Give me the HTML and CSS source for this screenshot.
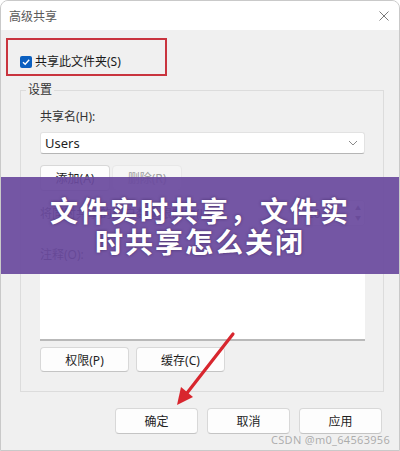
FILE: index.html
```html
<!DOCTYPE html>
<html lang="zh-CN">
<head>
    <meta charset="UTF-8">
    <meta name="viewport" content="width=device-width, initial-scale=1.0">
    <title>高级共享</title>
    <link rel="stylesheet" href="styles.css">
</head>
<body>
    <div class="window">
        <div class="titlebar">
            <span class="title">高级共享</span>
            <svg class="close" width="10" height="10" viewBox="0 0 10 10">
                <path d="M0.5 0.5 L9.5 9.5 M9.5 0.5 L0.5 9.5" />
            </svg>
        </div>

        <div class="content">
            <div class="highlight">
                <label class="check">
                    <span class="box">
                        <svg width="10" height="10" viewBox="0 0 10 10"><path d="M2 5.2 L4.2 7.3 L8.2 2.8" /></svg>
                    </span>
                    共享此文件夹(S)
                </label>
            </div>

            <fieldset class="group">
                <legend>设置</legend>
                <div class="field-label">共享名(H):</div>
                <div class="select">
                    <span>Users</span>
                    <svg width="10" height="6" viewBox="0 0 10 6"><path d="M1 1 L5 5 L9 1" /></svg>
                </div>
                <div class="btn-row small">
                    <button class="btn">添加(A)</button>
                    <button class="btn" disabled>删除(R)</button>
                </div>
                <div class="limit-row">
                    <span>将同时共享的用户数量限制为(L):</span>
                    <div class="spin">
                        <span>20</span>
                        <span class="spin-arrows"><i>▲</i><i>▼</i></span>
                    </div>
                </div>
                <div class="field-label comment">注释(O):</div>
                <div class="textarea"></div>
                <div class="btn-row wide">
                    <button class="btn">权限(P)</button>
                    <button class="btn">缓存(C)</button>
                </div>
            </fieldset>

            <div class="footer">
                <button class="btn">确定</button>
                <button class="btn">取消</button>
                <button class="btn">应用</button>
            </div>
        </div>

        <div class="banner">文件实时共享，文件实时共享怎么关闭</div>

        <svg class="arrow" width="400" height="451" viewBox="0 0 400 451">
            <line x1="233" y1="334" x2="187" y2="393" />
            <polygon points="177,405 193,397 181,387" />
        </svg>

        <div class="watermark">CSDN @m0_64563956</div>
    </div>
</body>
</html>
```

FILE: styles.css
```css
body {
    margin: 0;
    width: 400px;
    height: 451px;
    overflow: hidden;
    background: #fff;
    font-family: "Noto Sans", "Noto Sans CJK SC", sans-serif;
    font-size: 12px;
    color: #1f1f1f;
}
.window {
    position: relative;
    box-sizing: border-box;
    height: 451px;
    border: 1px solid #c9c9c9;
    border-radius: 8px 8px 0 0;
    background: #f0f0f0;
    overflow: hidden;
}
.titlebar {
    height: 29px;
    background: #fff;
    display: flex;
    align-items: center;
    justify-content: space-between;
    padding: 0 10px 0 8px;
}
.title {
    color: #5a5a5a;
    font-size: 12px;
}
.close path {
    stroke: #7a7a7a;
    stroke-width: 1;
    fill: none;
}
.content {
    padding: 8px 0 0 5px;
}
.highlight {
    box-sizing: border-box;
    width: 161px;
    height: 38px;
    border: 2px solid #c9343e;
    padding: 14px 0 0 12px;
}
.check {
    display: flex;
    align-items: center;
    line-height: 16px;
    color: #1a1a1a;
}
.box {
    width: 12px;
    height: 12px;
    border-radius: 2px;
    background: #0a5fc0;
    display: flex;
    align-items: center;
    justify-content: center;
    margin-right: 3px;
}
.box path {
    stroke: #fff;
    stroke-width: 1.4;
    fill: none;
}
.group {
    margin: 6px 15px 0 14px;
    border: 1px solid #dcdcdc;
    padding: 11px 18px 19px 19px;
}
.group legend {
    margin-left: -14px;
    padding: 0 2px;
    line-height: 16px;
    color: #333;
}
.field-label {
    line-height: 16px;
    color: #333;
}
.select {
    box-sizing: border-box;
    height: 22px;
    margin-top: 7px;
    background: #fff;
    border: 1px solid #e2e2e2;
    border-bottom-color: #b5b5b5;
    border-radius: 3px;
    display: flex;
    align-items: center;
    justify-content: space-between;
    padding: 0 6px 0 4px;
    font-size: 13px;
}
.select path {
    stroke: #8a8a8a;
    stroke-width: 1;
    fill: none;
}
.btn-row {
    display: flex;
    gap: 2px;
}
.btn-row.small {
    margin-top: 11px;
}
.btn-row.small .btn {
    width: 70px;
    height: 26px;
}
.btn-row.wide {
    margin-top: 6px;
    gap: 7px;
}
.btn-row.wide .btn {
    width: 89px;
    height: 25px;
}
.btn {
    box-sizing: border-box;
    background: #fdfdfd;
    border: 1px solid #d8d8d8;
    border-bottom-color: #c4c4c4;
    border-radius: 4px;
    font-family: inherit;
    font-size: 12px;
    color: #1f1f1f;
    padding: 0;
}
.btn:disabled {
    background: #f5f5f5;
    border-color: #e8e8e8;
    color: #9d9d9d;
}
.limit-row {
    margin-top: 9px;
    height: 26px;
    display: flex;
    align-items: center;
    justify-content: space-between;
    color: #333;
}
.spin {
    box-sizing: border-box;
    width: 64px;
    height: 26px;
    background: #fff;
    border: 1px solid #d8d8d8;
    border-radius: 3px;
    display: flex;
    align-items: center;
    justify-content: space-between;
    padding-left: 5px;
}
.spin-arrows {
    display: flex;
    flex-direction: column;
    font-size: 6px;
    line-height: 10px;
    color: #555;
    padding-right: 3px;
}
.spin-arrows i {
    font-style: normal;
}
.comment {
    margin-top: 21px;
}
.textarea {
    height: 71px;
    margin-top: 7px;
    box-sizing: border-box;
    background: #fff;
    border-bottom: 2px solid #b9b9b9;
}
.footer {
    margin-top: 16px;
    display: flex;
    justify-content: flex-end;
    gap: 9px;
    padding-right: 17px;
}
.footer .btn {
    width: 83px;
    height: 26px;
}
.banner {
    position: absolute;
    left: 0;
    right: 0;
    top: 176px;
    height: 97px;
    box-sizing: border-box;
    padding: 0 44px;
    background: rgba(106, 74, 158, 0.93);
    display: flex;
    align-items: center;
    justify-content: center;
    text-align: center;
    color: #fff;
    font-family: "Noto Sans CJK SC", sans-serif;
    font-weight: 700;
    font-size: 28px;
    letter-spacing: 2px;
    line-height: 31px;
    text-shadow: 0 0 3px rgba(40, 20, 70, 0.6);
}
.arrow {
    position: absolute;
    left: -1px;
    top: -1px;
}
.arrow line {
    stroke: #d8262e;
    stroke-width: 3.2;
    stroke-linecap: round;
}
.arrow polygon {
    fill: #d8262e;
}
.watermark {
    position: absolute;
    right: 9px;
    bottom: 3px;
    font-size: 11px;
    color: rgba(150, 150, 150, 0.75);
    letter-spacing: 0.3px;
}
```
